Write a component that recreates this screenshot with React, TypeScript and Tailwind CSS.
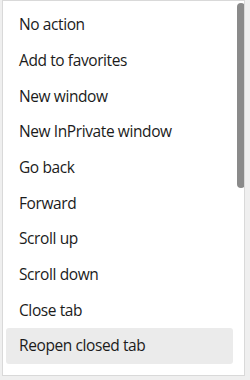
import React from 'react';

const actions = [
  'No action',
  'Add to favorites',
  'New window',
  'New InPrivate window',
  'Go back',
  'Forward',
  'Scroll up',
  'Scroll down',
  'Close tab',
  'Reopen closed tab',
  'Toggle vertical tabs',
];

const App: React.FC = () => {
  const highlighted = 'Reopen closed tab';
  return (
    <div className="w-[250px] h-[380px] bg-[#efefef] overflow-hidden pl-[2px] font-['Open_Sans',sans-serif]">
      <div className="relative w-[243px] h-[376px] bg-white border border-[#d9d9d9] overflow-hidden">
        <ul className="pt-[6px] pl-[3px]">
          {actions.map((label) => (
            <li
              key={label}
              className={
                label === highlighted
                  ? 'w-[227px] h-[35.7px] flex items-center px-[13px] rounded-[3px] bg-[#ebebeb] text-[15.5px] tracking-[-0.4px] text-[#1b1b1b] whitespace-nowrap'
                  : 'w-[227px] h-[35.7px] flex items-center px-[13px] text-[15.5px] tracking-[-0.4px] text-[#1b1b1b] whitespace-nowrap'
              }
            >
              {label}
            </li>
          ))}
        </ul>
        {/* overlay scrollbar thumb */}
        <div className="absolute top-[2px] right-[-1px] w-[8px] h-[185px] rounded-full bg-[#8a8a8a]" />
      </div>
    </div>
  );
};

export default App;
